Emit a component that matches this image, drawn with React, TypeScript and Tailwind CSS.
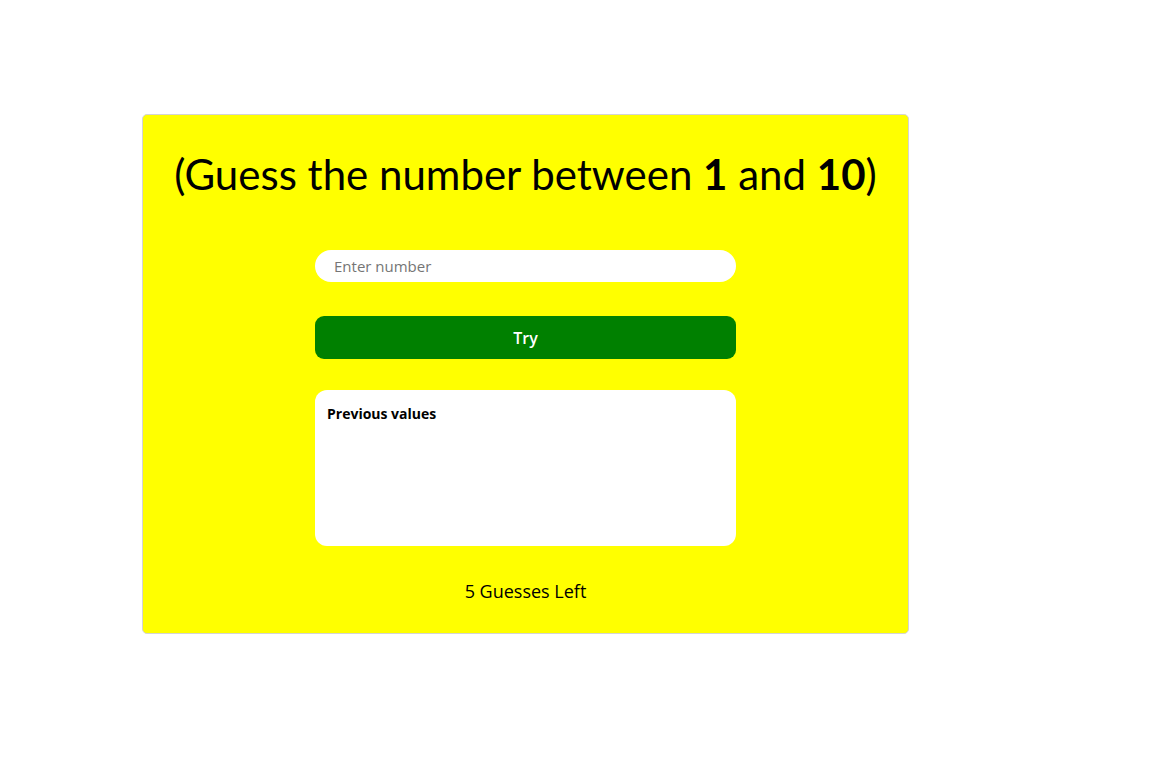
import { useState } from 'react';

export default function App() {
  const [value, setValue] = useState('');
  const [guesses] = useState<number[]>([]);

  return (
    <div className="min-h-screen bg-white pt-[114px] pl-[142px]" style={{ fontFamily: '"Open Sans", "Noto Sans", sans-serif' }}>
      <div className="w-[767px] h-[520px] bg-[#ffff00] border border-[#d4d4d4] rounded-[5px] flex flex-col items-center">
        <h1 className="mt-[33px] text-[42px] leading-[52px] text-black font-[Lato,sans-serif]">
          (Guess the number between <span className="font-bold">1</span> and <span className="font-bold">10</span>)
        </h1>

        <div className="w-[421px] mt-[50px] flex flex-col">
          <input
            type="text"
            value={value}
            onChange={(e) => setValue(e.target.value)}
            placeholder="Enter number"
            className="h-[32px] w-full rounded-[16px] bg-white px-[19px] text-[15px] text-black placeholder:text-[#757575] outline-none"
          />
          <button className="mt-[34px] h-[43px] w-full rounded-[9px] bg-[#008000] text-white text-[16px] font-semibold">
            Try
          </button>
          <div className="mt-[31px] h-[156px] w-full rounded-[12px] bg-white px-[12px] pt-[13px]">
            <p className="text-[14px] font-bold text-black">Previous values</p>
            {guesses.map((g, i) => (
              <span key={i} className="mr-2 text-sm">{g}</span>
            ))}
          </div>
        </div>

        <p className="mt-[32px] text-[18px] text-black">5 Guesses Left</p>
      </div>
    </div>
  );
}
